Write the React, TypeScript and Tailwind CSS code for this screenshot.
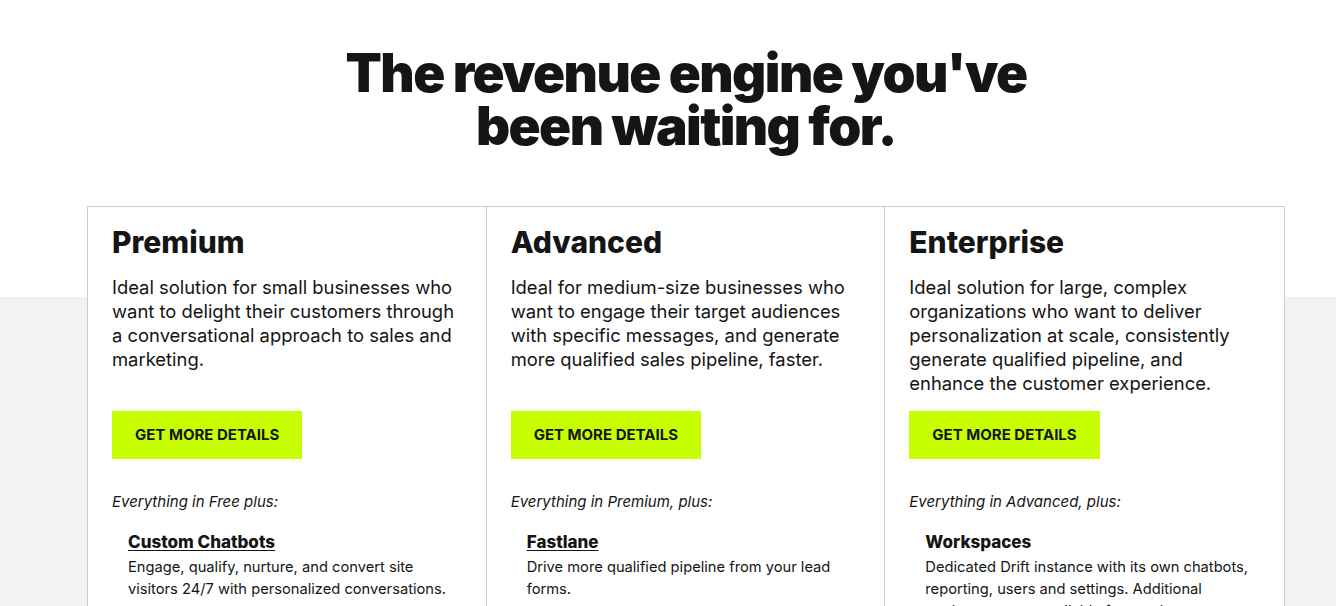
const plans = [
  {
    name: "Premium",
    blurb:
      "Ideal solution for small businesses who want to delight their customers through a conversational approach to sales and marketing.",
    lead: "Everything in Free plus:",
    feature: "Custom Chatbots",
    link: true,
    text: "Engage, qualify, nurture, and convert site visitors 24/7 with personalized conversations.",
  },
  {
    name: "Advanced",
    blurb:
      "Ideal for medium-size businesses who want to engage their target audiences with specific messages, and generate more qualified sales pipeline, faster.",
    lead: "Everything in Premium, plus:",
    feature: "Fastlane",
    link: true,
    text: "Drive more qualified pipeline from your lead forms.",
  },
  {
    name: "Enterprise",
    blurb:
      "Ideal solution for large, complex organizations who want to deliver personalization at scale, consistently generate qualified pipeline, and enhance the customer experience.",
    lead: "Everything in Advanced, plus:",
    feature: "Workspaces",
    link: false,
    text: "Dedicated Drift instance with its own chatbots, reporting, users and settings. Additional workspaces are available for purchase.",
  },
];

export default function App() {
  return (
    <div className="min-h-screen bg-white font-['Inter',sans-serif] text-[#151515]">
      <div className="ml-[87px] w-[1198px]">
        <h1 className="pt-[47px] text-center text-[53px] font-black leading-[53px] tracking-[-1.6px]">
          The revenue engine you've
          <br />
          been waiting for.
        </h1>
      </div>

      <div className="mt-[53px] bg-[linear-gradient(to_bottom,#ffffff_91px,#f2f2f2_91px)] pb-10">
        <div className="ml-[87px] grid w-[1198px] grid-cols-3 divide-x divide-[#cccccc] border border-[#cccccc] bg-white">
          {plans.map((p) => (
            <div key={p.name} className="px-6 pt-[17px] pb-8">
              <h2 className="text-[30px] font-extrabold leading-9">{p.name}</h2>
              <p className="mt-[15px] h-[120px] text-[18.4px] leading-6">{p.blurb}</p>
              <a
                href="#"
                className="mt-[16px] inline-flex h-12 items-center bg-[#c8ff00] px-[23px] text-[15px] font-bold uppercase"
              >
                Get more details
              </a>
              <p className="mt-[33px] text-[15px] italic leading-5">{p.lead}</p>
              <div className="mt-[18px] pl-4">
                <h3
                  className={
                    p.link
                      ? "text-[17px] font-extrabold leading-6 underline underline-offset-2"
                      : "text-[17px] font-extrabold leading-6"
                  }
                >
                  {p.feature}
                </h3>
                <p className="mt-[2px] text-[14.7px] leading-[22px]">{p.text}</p>
              </div>
            </div>
          ))}
        </div>
      </div>
    </div>
  );
}
